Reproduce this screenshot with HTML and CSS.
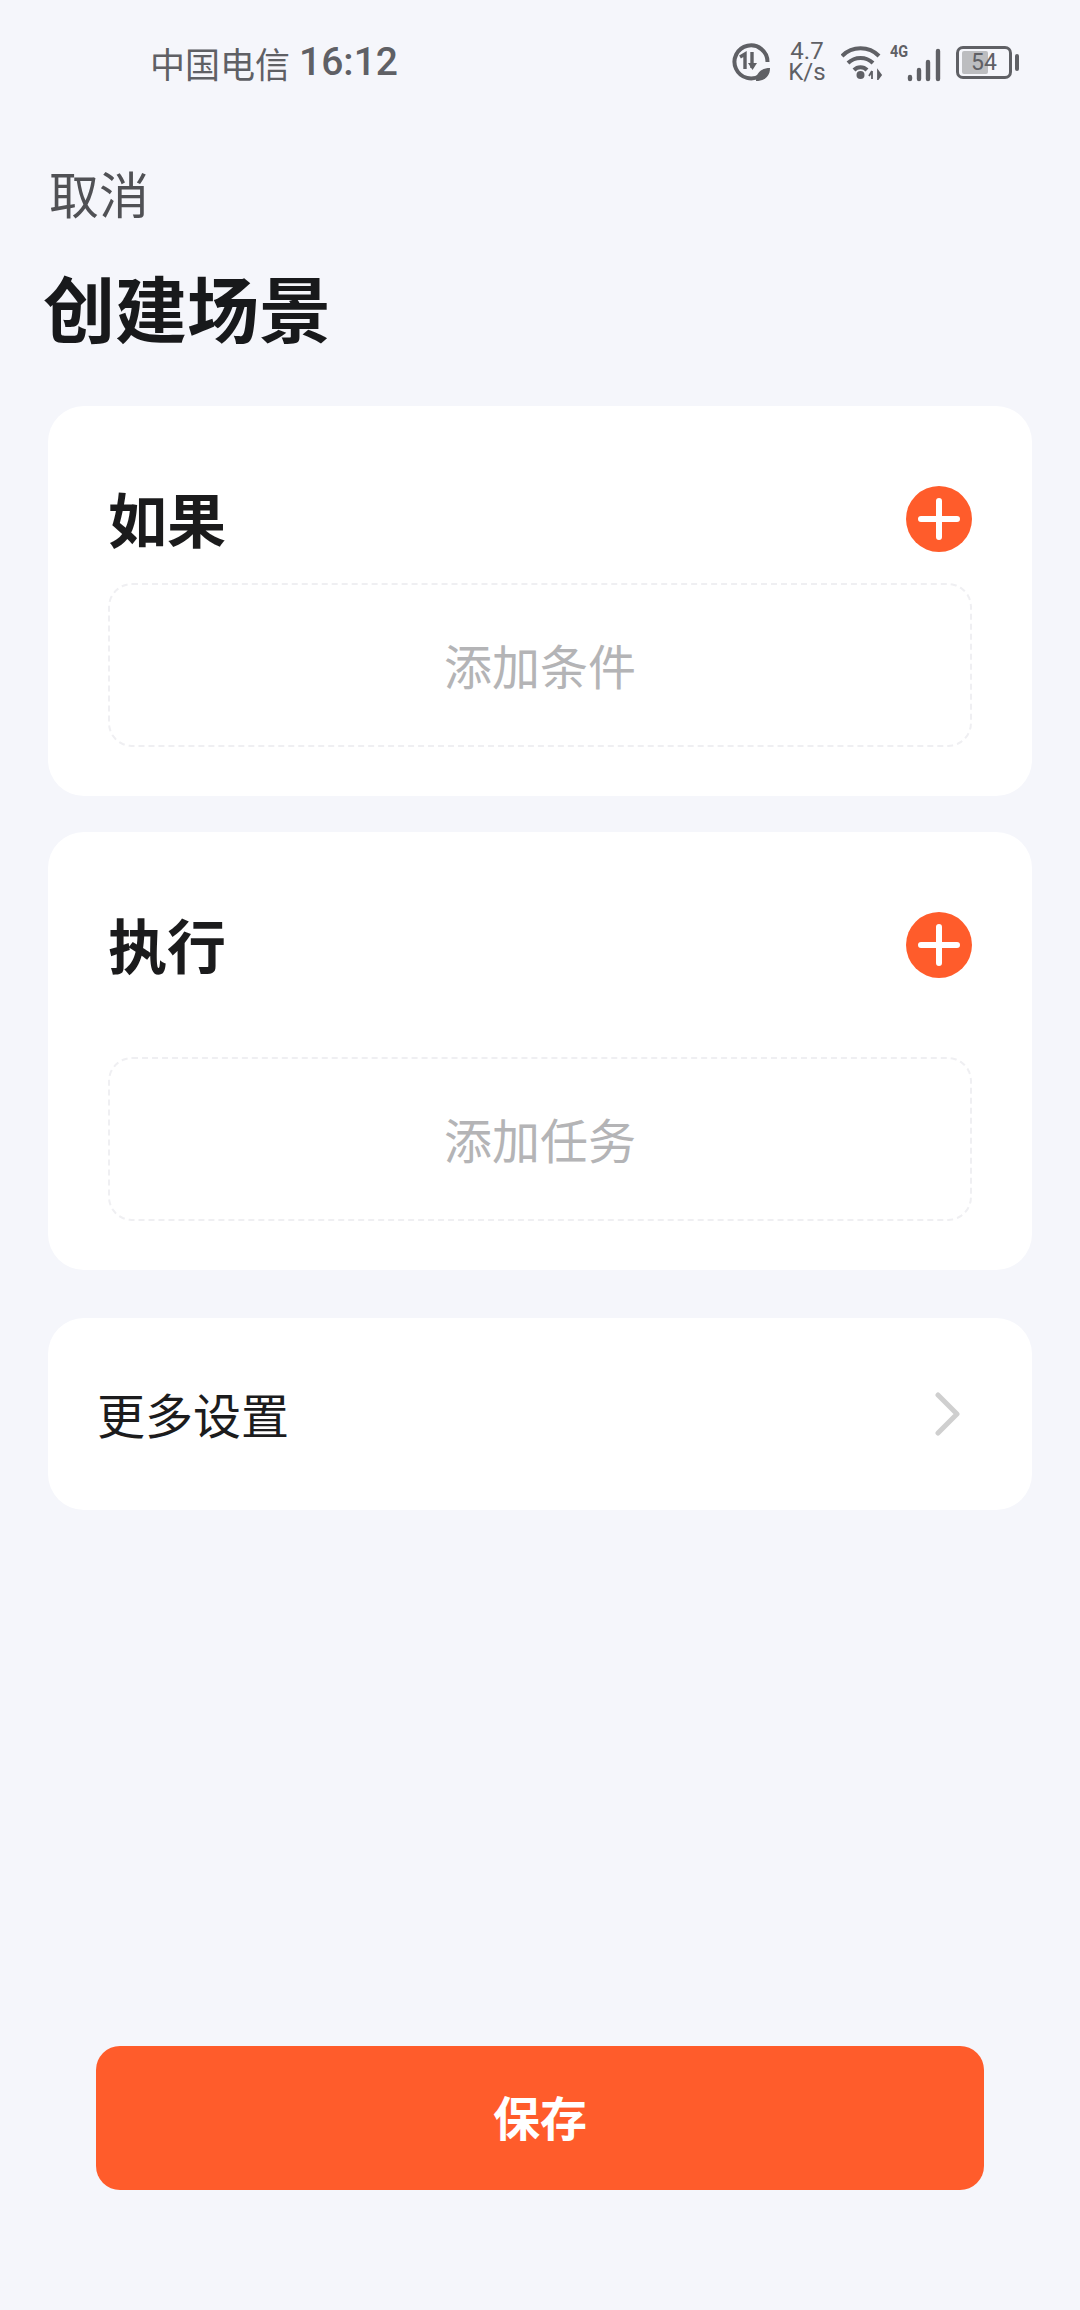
FILE: index.html
```html
<!DOCTYPE html>
<html lang="zh-CN">
<head>
    <meta charset="UTF-8">
    <meta name="viewport" content="width=device-width, initial-scale=1.0">
    <title>创建场景</title>
    <link rel="stylesheet" href="styles.css">
</head>
<body>
    <div class="page">
        <div class="status-bar">
            <div class="status-left">
                <span class="carrier">中国电信</span>
                <span class="time">16:12</span>
            </div>
            <div class="status-right">
                <svg class="icon-data" viewBox="0 0 38 38" width="38" height="38">
                    <path d="M29 32A16.5 16.5 0 1 1 35.5 19" fill="none" stroke="#5f6065" stroke-width="4"/>
                    <path d="M8 14l5-3v15" fill="none" stroke="#5f6065" stroke-width="3.4"/>
                    <path d="M20 9v16" fill="none" stroke="#5f6065" stroke-width="3.4"/>
                    <path d="M16 20l9 0-4.5 7z" fill="#5f6065"/>
                    <path d="M24 38c0-8 5-13 14-13 0 8-5 13-14 13z" fill="#5f6065"/>
                </svg>
                <div class="speed">
                    <span>4.7</span>
                    <span>K/s</span>
                </div>
                <svg class="icon-wifi" viewBox="0 0 42 36" width="42" height="36">
                    <path d="M1 12a26 26 0 0 1 37 0M7 19a18 18 0 0 1 25 0M13 26a9 9 0 0 1 13 0" fill="none" stroke="#5f6065" stroke-width="4"/>
                    <circle cx="19.500" cy="31" r="4" fill="#5f6065"/>
                    <path d="M31 27v8M28 32l3-5M37 27v8l3-4z" fill="#5f6065" stroke="#5f6065" stroke-width="1.8"/>
                </svg>
                <div class="signal">
                    <span class="signal-label">4G</span>
                    <svg viewBox="0 0 36 34" width="36" height="34">
                        <path d="M3 29v2M12 22v9M21 14v17M31 3v28" fill="none" stroke="#5f6065" stroke-width="4.400" stroke-linecap="round"/>
                    </svg>
                </div>
                <div class="battery">
                    <div class="battery-body">
                        <div class="battery-level"></div>
                        <span class="battery-text">54</span>
                    </div>
                    <div class="battery-cap"></div>
                </div>
            </div>
        </div>

        <div class="cancel">取消</div>
        <h1 class="title">创建场景</h1>

        <section class="card card-if">
            <div class="card-head">
                <h2>如果</h2>
                <button class="add-btn" type="button">
                    <svg viewBox="0 0 66 66" width="66" height="66">
                        <path d="M15 33h36M33 15v36" stroke="#fff" stroke-width="6" stroke-linecap="round"/>
                    </svg>
                </button>
            </div>
            <div class="placeholder">添加条件</div>
        </section>

        <section class="card card-do">
            <div class="card-head">
                <h2>执行</h2>
                <button class="add-btn" type="button">
                    <svg viewBox="0 0 66 66" width="66" height="66">
                        <path d="M15 33h36M33 15v36" stroke="#fff" stroke-width="6" stroke-linecap="round"/>
                    </svg>
                </button>
            </div>
            <div class="placeholder">添加任务</div>
        </section>

        <section class="card more">
            <span class="more-label">更多设置</span>
            <svg viewBox="0 0 28 44" width="28" height="44">
                <path d="M4 3l19 19L4 41" fill="none" stroke="#cfcfcf" stroke-width="5" stroke-linecap="round" stroke-linejoin="round"/>
            </svg>
        </section>

        <div class="footer">
            <button class="save" type="button">保存</button>
        </div>
    </div>
</body>
</html>
```

FILE: styles.css
```css
* {
    box-sizing: border-box;
}

html, body {
    margin: 0;
    height: 100%;
}

body {
    background-color: #f5f6fb;
    font-family: "Noto Sans CJK SC", "Noto Sans", sans-serif;
}

.page {
    display: flex;
    flex-direction: column;
    height: 2310px;
    padding: 0 48px;
}

/* status bar */
.status-bar {
    display: flex;
    justify-content: space-between;
    align-items: center;
    height: 62px;
    margin: 31px 13px 0 102px;
    color: #5f6065;
}

.status-left {
    display: flex;
    align-items: center;
    gap: 9px;
}

.carrier {
    font-size: 35px;
}

.time {
    font-family: "Roboto", sans-serif;
    font-size: 39px;
    font-weight: 500;
}

.status-right {
    display: flex;
    align-items: center;
}

.icon-data {
    margin-right: 17px;
}

.speed {
    display: flex;
    flex-direction: column;
    align-items: center;
    width: 40px;
    margin-right: 14px;
    font-family: "Roboto", sans-serif;
    font-size: 24px;
    line-height: 21px;
}

.icon-wifi {
    margin-right: 7px;
}

.signal {
    position: relative;
    width: 53px;
    height: 40px;
    display: flex;
    justify-content: flex-end;
    align-items: flex-end;
    margin-right: 13px;
}

.signal-label {
    position: absolute;
    top: 0;
    left: 0;
    font-family: "Roboto", sans-serif;
    font-size: 17px;
    font-weight: 700;
    line-height: 18px;
    transform: scaleX(0.85);
    transform-origin: left;
}

.battery {
    display: flex;
    align-items: center;
    gap: 3px;
}

.battery-body {
    position: relative;
    width: 56px;
    height: 33px;
    border: 3px solid #5f6065;
    border-radius: 7px;
    display: flex;
    align-items: center;
    justify-content: center;
}

.battery-level {
    position: absolute;
    left: 3px;
    top: 2px;
    bottom: 2px;
    width: 26px;
    background-color: #bcbdc0;
    border-radius: 2px;
}

.battery-text {
    position: relative;
    font-family: "Roboto", sans-serif;
    font-size: 23px;
    line-height: 1;
}

.battery-cap {
    width: 4px;
    height: 17px;
    background-color: #5f6065;
    border-radius: 2px;
}

/* header */
.cancel {
    margin-top: 64px;
    margin-left: 1px;
    font-size: 50px;
    line-height: 70px;
    color: #505155;
}

.title {
    margin: 29px 0 0 -5px;
    font-size: 72px;
    line-height: 100px;
    font-weight: 700;
    color: #18191b;
}

/* cards */
.card {
    background-color: #fff;
    border-radius: 36px;
}

.card-if {
    margin-top: 50px;
    height: 390px;
    padding: 80px 60px 0;
}

.card-do {
    margin-top: 36px;
    height: 438px;
    padding: 80px 60px 0;
}

.card-head {
    display: flex;
    justify-content: space-between;
    align-items: center;
    height: 66px;
}

.card-head h2 {
    margin: -2px 0 0 0;
    font-size: 59px;
    line-height: 66px;
    font-weight: 700;
    color: #1b1b1c;
}

.add-btn {
    width: 66px;
    height: 66px;
    padding: 0;
    border: none;
    border-radius: 50%;
    background-color: #ff5c2b;
    display: block;
}

.add-btn svg {
    display: block;
}

.placeholder {
    display: flex;
    align-items: center;
    justify-content: center;
    height: 164px;
    padding-bottom: 2px;
    border: 2px dashed #efeff2;
    border-radius: 24px;
    font-size: 48px;
    color: #b4b4b6;
}

.card-if .placeholder {
    margin-top: 31px;
}

.card-do .placeholder {
    margin-top: 79px;
}

.more {
    display: flex;
    justify-content: space-between;
    align-items: center;
    height: 192px;
    margin-top: 48px;
    padding: 0 70px 0 49px;
    font-size: 48px;
    color: #1c1c1d;
}

.more-label {
    margin-bottom: 3px;
}

/* bottom button */
.footer {
    margin-top: auto;
    padding: 0 0 120px;
    display: flex;
    justify-content: center;
}

.save {
    width: 888px;
    height: 144px;
    padding: 0 0 5px;
    border: none;
    border-radius: 24px;
    background-color: #ff5c2b;
    color: #fff;
    font-family: inherit;
    font-size: 47px;
    font-weight: 700;
}
```
